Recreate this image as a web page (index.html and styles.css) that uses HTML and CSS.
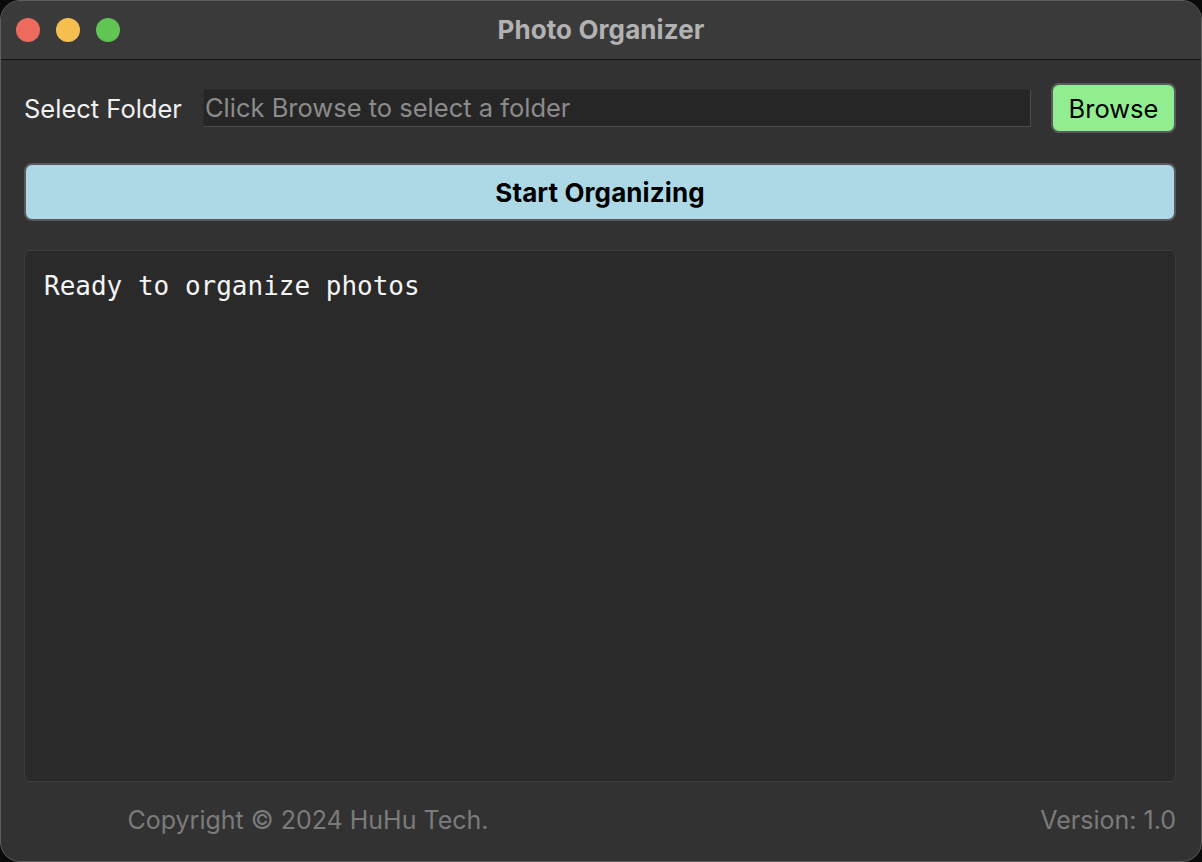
FILE: index.html
```html
<!DOCTYPE html>
<html lang="en">
<head>
<meta charset="utf-8">
<title>Photo Organizer</title>
<link rel="stylesheet" href="styles.css">
</head>
<body>
<div class="window">
  <header class="titlebar">
    <div class="lights">
      <span class="light red"></span>
      <span class="light yellow"></span>
      <span class="light green"></span>
    </div>
    <div class="title">Photo Organizer</div>
  </header>
  <main class="content">
    <div class="folder-row">
      <label class="folder-label">Select Folder</label>
      <div class="folder-input">Click Browse to select a folder</div>
      <button class="browse-btn">Browse</button>
    </div>
    <button class="start-btn">Start Organizing</button>
    <div class="log">Ready to organize photos</div>
    <footer class="footer">
      <div class="copyright">Copyright © 2024 HuHu Tech.</div>
      <div class="version">Version: 1.0</div>
    </footer>
  </main>
</div>
</body>
</html>
```

FILE: styles.css
```css
* { box-sizing: border-box; }

html, body {
  margin: 0;
  padding: 0;
  background: #0b0b0b;
}

body {
  font-family: "Inter", "Liberation Sans", sans-serif;
}

.window {
  width: 1202px;
  height: 862px;
  border: 1px solid #5e5e5e;
  border-radius: 20px;
  overflow: hidden;
  background: #323232;
  display: flex;
  flex-direction: column;
}

.titlebar {
  position: relative;
  height: 59px;
  flex: none;
  background: #3a3a3a;
  border-bottom: 1px solid #141414;
  display: flex;
  align-items: center;
  justify-content: center;
}

.lights {
  position: absolute;
  left: 15px;
  top: 17px;
  display: flex;
  gap: 16px;
}

.light {
  width: 24px;
  height: 24px;
  border-radius: 50%;
  display: block;
}
.light.red { background: #ed6a5e; }
.light.yellow { background: #f5bf4f; }
.light.green { background: #61c554; }

.title {
  color: #b2b2b2;
  font-weight: 700;
  font-size: 26px;
  letter-spacing: 0.1px;
  margin-top: -2px;
}

.content {
  flex: 1;
  display: flex;
  flex-direction: column;
  padding: 23px 25px 0 23px;
}

.folder-row {
  display: flex;
  align-items: center;
  height: 50px;
  gap: 20px;
}

.folder-label {
  color: #f0f0f0;
  font-size: 25.5px;
  margin-right: 1px;
}

.folder-input {
  flex: 1;
  height: 38px;
  background: #262626;
  border-top: 1px solid #2b2b2b;
  border-left: 1px solid #2b2b2b;
  border-right: 1px solid #4b4b4b;
  border-bottom: 1px solid #4b4b4b;
  color: #8b8b8b;
  font-size: 25.5px;
  line-height: 36px;
  padding-left: 1px;
  white-space: nowrap;
  overflow: hidden;
}

.browse-btn {
  width: 125px;
  height: 50px;
  background: #90ee90;
  border: 2px solid #5a5a5a;
  border-radius: 8px;
  color: #000;
  font-family: inherit;
  font-size: 25.5px;
  padding: 0;
}

.start-btn {
  margin-top: 30px;
  height: 58px;
  width: 100%;
  background: #add8e6;
  border: 2px solid #595959;
  border-radius: 8px;
  color: #000;
  font-family: inherit;
  font-weight: 700;
  font-size: 26px;
  letter-spacing: 0.1px;
  padding: 0;
}

.log {
  margin-top: 29px;
  flex: 1;
  background: #2a2a2a;
  border: 1px solid #3c3c3c;
  border-radius: 6px;
  padding: 20px 19px;
  color: #f4f4f4;
  font-family: "DejaVu Sans Mono", "Liberation Mono", monospace;
  font-size: 26px;
  line-height: 30px;
}

.footer {
  height: 79px;
  flex: none;
  display: grid;
  grid-template-columns: 1fr 1fr;
  align-items: center;
  padding-bottom: 4px;
  color: #7b7b7b;
  font-size: 25px;
}

.copyright {
  text-align: center;
  padding-right: 8px;
}

.version {
  text-align: right;
}
```
